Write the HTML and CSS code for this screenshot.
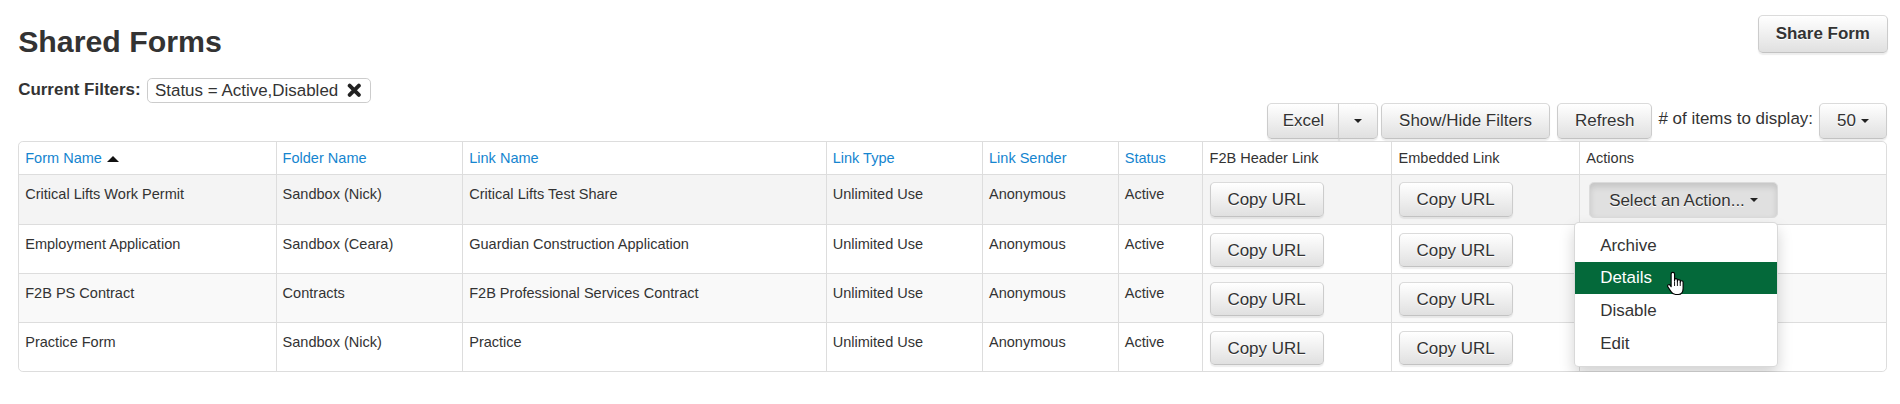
FILE: index.html
```html
<!DOCTYPE html>
<html lang="en">
<head>
<meta charset="utf-8">
<title>Shared Forms</title>
<link rel="stylesheet" href="styles.css">
</head>
<body>
<div class="page">
  <header class="top">
    <h1 class="title">Shared Forms</h1>
    <button class="btn btn-share">Share Form</button>
  </header>

  <div class="filters">
    <span class="filters-label">Current Filters:</span>
    <span class="chip">Status = Active,Disabled
      <svg class="chip-x" viewBox="0 0 12 12" width="12" height="12"><path d="M2.2 2.2 L9.8 9.8 M9.8 2.2 L2.2 9.8" stroke="#222" stroke-width="3.2" stroke-linecap="round"/></svg>
    </span>
  </div>

  <div class="toolbar">
    <div class="btn-group">
      <button class="btn btn-left">Excel</button><button class="btn btn-right btn-caret"><span class="caret"></span></button>
    </div>
    <button class="btn">Show/Hide Filters</button>
    <button class="btn btn-refresh">Refresh</button>
    <span class="items-label"># of items to display:</span>
    <button class="btn">50 <span class="caret"></span></button>
  </div>

  <div class="table-wrap">
    <table>
      <colgroup>
        <col class="c1"><col class="c2"><col class="c3"><col class="c4"><col class="c5"><col class="c6"><col class="c7"><col class="c8"><col>
      </colgroup>
      <thead>
        <tr>
          <th><a class="sort">Form Name</a><span class="sort-up"></span></th>
          <th><a class="sort">Folder Name</a></th>
          <th><a class="sort">Link Name</a></th>
          <th><a class="sort">Link Type</a></th>
          <th><a class="sort">Link Sender</a></th>
          <th><a class="sort">Status</a></th>
          <th>F2B Header Link</th>
          <th>Embedded Link</th>
          <th>Actions</th>
        </tr>
      </thead>
      <tbody>
        <tr class="row-hover">
          <td>Critical Lifts Work Permit</td>
          <td>Sandbox (Nick)</td>
          <td>Critical Lifts Test Share</td>
          <td>Unlimited Use</td>
          <td>Anonymous</td>
          <td>Active</td>
          <td class="btn-cell"><button class="btn btn-copy">Copy URL</button></td>
          <td class="btn-cell"><button class="btn btn-copy">Copy URL</button></td>
          <td class="btn-cell">
            <div class="action-group">
              <button class="btn btn-select">Select an Action... <span class="caret"></span></button>
              <ul class="menu">
                <li>Archive</li>
                <li class="active">Details</li>
                <li>Disable</li>
                <li>Edit</li>
              </ul>
              <svg class="cursor" viewBox="0 0 17 22" width="16" height="21"><path d="M4.5 2.5 a1.5 1.5 0 0 1 3 0 V8.5 V7.8 a1.25 1.25 0 0 1 2.5 0 V9.2 V8.6 a1.25 1.25 0 0 1 2.5 0 V10 V9.6 a1.25 1.25 0 0 1 2.5 0 V15 c0 3.2 -1.6 5.5 -4.2 5.5 H8.4 c-2 0 -3 -1 -4 -2.6 L1.6 13.7 a1.2 1.2 0 0 1 2 -1.4 L4.5 13.6 Z" fill="#fff" stroke="#000" stroke-width="1" stroke-linejoin="round"/><path d="M7.5 9 V13 M10 9.5 V13 M12.5 10 V13" stroke="#000" stroke-width="0.8"/></svg>
            </div>
          </td>
        </tr>
        <tr>
          <td>Employment Application</td>
          <td>Sandbox (Ceara)</td>
          <td>Guardian Construction Application</td>
          <td>Unlimited Use</td>
          <td>Anonymous</td>
          <td>Active</td>
          <td class="btn-cell"><button class="btn btn-copy">Copy URL</button></td>
          <td class="btn-cell"><button class="btn btn-copy">Copy URL</button></td>
          <td></td>
        </tr>
        <tr class="row-stripe">
          <td>F2B PS Contract</td>
          <td>Contracts</td>
          <td>F2B Professional Services Contract</td>
          <td>Unlimited Use</td>
          <td>Anonymous</td>
          <td>Active</td>
          <td class="btn-cell"><button class="btn btn-copy">Copy URL</button></td>
          <td class="btn-cell"><button class="btn btn-copy">Copy URL</button></td>
          <td></td>
        </tr>
        <tr>
          <td>Practice Form</td>
          <td>Sandbox (Nick)</td>
          <td>Practice</td>
          <td>Unlimited Use</td>
          <td>Anonymous</td>
          <td>Active</td>
          <td class="btn-cell"><button class="btn btn-copy">Copy URL</button></td>
          <td class="btn-cell"><button class="btn btn-copy">Copy URL</button></td>
          <td></td>
        </tr>
      </tbody>
    </table>
  </div>
</div>
</body>
</html>
```

FILE: styles.css
```css
html, body {
  margin: 0;
  background: #fff;
}

body {
  font-family: "Liberation Sans", Arial, Helvetica, sans-serif;
  font-size: 14px;
  color: #333;
}

.page {
  zoom: 1.2117;
  padding: 12px 11px 0 15px;
}

.top {
  display: flex;
  justify-content: space-between;
  align-items: flex-start;
}

.title {
  margin: 8px 0 0;
  font-size: 25px;
  line-height: 29px;
  font-weight: bold;
  color: #333;
}

.btn {
  font-family: inherit;
  font-size: 14px;
  color: #333;
  background: linear-gradient(to bottom, #fff 0%, #e0e0e0 100%);
  border: 1px solid #ccc;
  border-color: #dbdbdb #ccc #c2c2c2;
  border-radius: 4px;
  box-shadow: inset 0 1px 0 rgba(255, 255, 255, .15), 0 1px 1px rgba(0, 0, 0, .075);
  text-shadow: 0 1px 0 #fff;
  padding: 5px 14px;
  line-height: 18px;
  display: inline-flex;
  align-items: center;
  gap: 4px;
  cursor: pointer;
  white-space: nowrap;
}

.btn-share {
  font-weight: bold;
  padding: 5px 14px;
  line-height: 20px;
  margin-right: -1px;
}

.filters {
  margin-top: 15px;
  display: flex;
  align-items: center;
  gap: 5px;
  height: 21px;
}

.filters-label {
  font-weight: bold;
}

.chip {
  border: 1px solid #ccc;
  border-radius: 4px;
  padding: 0 7px 0 6px;
  line-height: 19px;
  display: inline-flex;
  align-items: center;
  gap: 7px;
}

.chip-x {
  display: block;
}

.toolbar {
  display: flex;
  justify-content: flex-end;
  align-items: center;
  gap: 5px;
  height: 30px;
  margin-bottom: 1px;
}

.btn-group {
  display: flex;
  margin-right: -2px;
}

.btn-left {
  padding: 5px 12px;
  border-top-right-radius: 0;
  border-bottom-right-radius: 0;
}

.btn-right {
  border-top-left-radius: 0;
  border-bottom-left-radius: 0;
  margin-left: -1px;
}

.btn-caret {
  padding: 5px 12px;
  height: 30px;
}

.btn-refresh {
  margin-left: 1px;
}

.items-label {
  margin-top: -3px;
}

.caret {
  display: inline-block;
  width: 0;
  height: 0;
  border-top: 4px solid #222;
  border-left: 4px solid transparent;
  border-right: 4px solid transparent;
}

.table-wrap {
  border: 1px solid #ddd;
  border-radius: 4px;
}

table {
  width: 100%;
  border-collapse: collapse;
  table-layout: fixed;
  font-size: 12px;
}

.c1 { width: 212px; }
.c2 { width: 154px; }
.c3 { width: 300px; }
.c4 { width: 129px; }
.c5 { width: 112px; }
.c6 { width: 70px; }
.c7 { width: 156px; }
.c8 { width: 155px; }

th {
  font-weight: normal;
  text-align: left;
  padding: 6px 5px 5px;
  line-height: 16px;
  border-bottom: 1px solid #ddd;
  white-space: nowrap;
}

td {
  padding: 7px 5px 4px;
  line-height: 18px;
  vertical-align: top;
  white-space: nowrap;
}

td.btn-cell {
  padding: 6px 5px 5px;
}

th + th,
td + td {
  border-left: 1px solid #ddd;
}

tbody tr + tr td {
  border-top: 1px solid #ddd;
}

.sort {
  color: #1585cf;
  text-decoration: none;
}

.sort-up {
  display: inline-block;
  width: 0;
  height: 0;
  border-bottom: 5px solid #111;
  border-left: 5px solid transparent;
  border-right: 5px solid transparent;
  margin-left: 4px;
  vertical-align: 1px;
}

.row-hover td {
  background: #f4f4f4;
}

.row-stripe td {
  background: #f9f9f9;
}

.btn-copy {
  padding: 4px 14px;
  line-height: 19px;
}

.action-group {
  position: relative;
  display: inline-block;
  margin-left: 2px;
}

.btn-select {
  background: #e0e0e0;
  border-color: #dbdbdb;
  box-shadow: inset 0 3px 5px rgba(0, 0, 0, .125);
  padding: 5px 16px;
  line-height: 18px;
}

.menu {
  position: absolute;
  right: 0;
  top: calc(100% + 3px);
  width: 167px;
  margin: 0;
  padding: 5px 0;
  list-style: none;
  background: #fff;
  border: 1px solid rgba(0, 0, 0, .15);
  border-radius: 4px;
  box-shadow: 0 6px 12px rgba(0, 0, 0, .175);
  font-size: 14px;
  z-index: 10;
}

.menu li {
  padding: 3px 21px;
  line-height: 21px;
  color: #333;
}

.menu li.active {
  background: #04693a;
  color: #fff;
}

.cursor {
  position: absolute;
  left: 64px;
  top: 73px;
  z-index: 11;
}
```
